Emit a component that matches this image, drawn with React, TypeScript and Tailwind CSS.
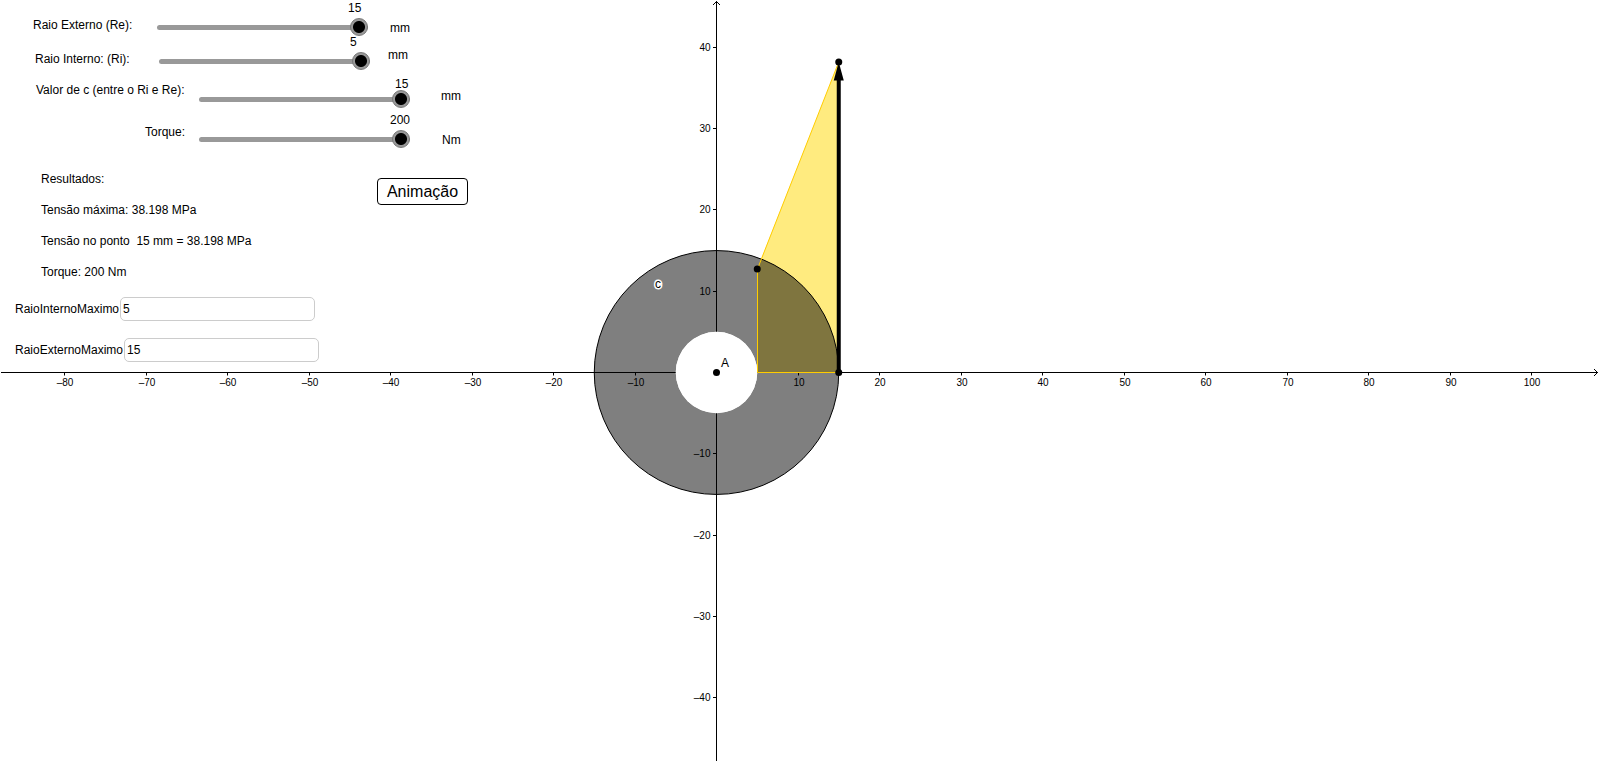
import { useEffect, useState } from 'react'
import clsx from 'clsx'

const ORIGIN = { x: 716.5, y: 372.5 }
const UNIT = { x: 8.15, y: 8.13 }
const PI = 3.1415

const px = (x: number) => ORIGIN.x + x * UNIT.x
const py = (y: number) => ORIGIN.y - y * UNIT.y
// keeps one pixel wide lines crisp
const snap = (v: number) => Math.floor(v) + 0.5

const tickLabel = (n: number) => (n < 0 ? `–${-n}` : `${n}`)

function useWindowSize() {
  const [size, setSize] = useState({ width: window.innerWidth, height: window.innerHeight })

  useEffect(() => {
    const onResize = () => setSize({ width: window.innerWidth, height: window.innerHeight })
    window.addEventListener('resize', onResize)
    return () => window.removeEventListener('resize', onResize)
  }, [])

  return size
}

function ticks(from: number, to: number) {
  const list: number[] = []
  for (let n = Math.ceil(from / 10) * 10; n <= to; n += 10) {
    if (n !== 0) list.push(n)
  }
  return list
}

interface GraphProps {
  outer: number
  inner: number
  c: number
  maxStress: number
}

function Graph({ outer, inner, c, maxStress }: GraphProps) {
  const { width, height } = useWindowSize()
  const right = width - 2
  const bottom = height - 2
  const xTicks = ticks(-ORIGIN.x / UNIT.x + 3, (right - ORIGIN.x) / UNIT.x - 3)
  const yTicks = ticks((ORIGIN.y - bottom) / UNIT.y + 3, ORIGIN.y / UNIT.y - 3)
  const stressAt = (r: number) => (maxStress * r) / outer

  const innerX = px(inner)
  const innerY = py(stressAt(inner))
  const cX = px(c)
  const cY = py(stressAt(c))

  return (
    <svg
      width={width}
      height={height}
      className="absolute inset-0 block font-['Liberation_Sans',Arial,sans-serif]"
      aria-label="Distribuição de tensões"
    >
      {/* axes */}
      <g stroke="#000" fill="none">
        <path d={`M1 ${ORIGIN.y}H${right}`} />
        <path d={`M${right - 4} ${ORIGIN.y - 3.5}L${right - 0.5} ${ORIGIN.y}L${right - 4} ${ORIGIN.y + 3.5}`} />
        <path d={`M${ORIGIN.x} 1V${bottom}`} />
        <path d={`M${ORIGIN.x - 3.5} 5L${ORIGIN.x} 1.5L${ORIGIN.x + 3.5} 5`} />
        {xTicks.map((n) => (
          <path key={n} d={`M${snap(px(n))} ${ORIGIN.y}v3`} />
        ))}
        {yTicks.map((n) => (
          <path key={n} d={`M${ORIGIN.x} ${snap(py(n))}h-3.5`} />
        ))}
      </g>
      <g fontSize="10" fill="#000">
        {xTicks.map((n) => (
          <text key={n} x={snap(px(n)) + 0.5} y={ORIGIN.y + 13.5} textAnchor="middle">
            {tickLabel(n)}
          </text>
        ))}
        {yTicks.map((n) => (
          <text key={n} x={ORIGIN.x - 6} y={snap(py(n)) + 3.5} textAnchor="end">
            {tickLabel(n)}
          </text>
        ))}
      </g>

      {/* stress distribution */}
      <path
        d={`M${innerX} ${ORIGIN.y}V${innerY}L${cX} ${cY}V${ORIGIN.y}Z`}
        fill="#ffd700"
        fillOpacity="0.5"
      />

      {/* shaft section */}
      <path
        fillRule="evenodd"
        fill="#000"
        fillOpacity="0.5"
        d={[outer, inner]
          .map((r) => {
            const rx = r * UNIT.x
            const ry = r * UNIT.y
            return `M${ORIGIN.x - rx} ${ORIGIN.y}a${rx} ${ry} 0 1 0 ${2 * rx} 0a${rx} ${ry} 0 1 0 ${-2 * rx} 0Z`
          })
          .join('')}
      />
      <ellipse cx={ORIGIN.x} cy={ORIGIN.y} rx={inner * UNIT.x} ry={inner * UNIT.y} fill="#fff" />
      <ellipse cx={ORIGIN.x} cy={ORIGIN.y} rx={outer * UNIT.x} ry={outer * UNIT.y} fill="none" stroke="#000" />

      <path
        d={`M${cX} ${ORIGIN.y}H${snap(innerX)}V${innerY}L${cX} ${cY}`}
        fill="none"
        stroke="#ffcc00"
        strokeWidth="1"
      />
      <path d={`M${cX} ${ORIGIN.y}V${cY + 18}`} stroke="#000" strokeWidth="4" />
      <path d={`M${cX} ${cY}l5 18.5h-10Z`} />

      {[
        [ORIGIN.x, ORIGIN.y],
        [innerX, innerY],
        [cX, cY],
        [cX, ORIGIN.y],
      ].map(([x, y]) => (
        <circle key={`${x},${y}`} cx={x} cy={y} r="3.5" />
      ))}
      <text x="721" y="367" fontSize="12">
        A
      </text>
      <text x="655" y="288" fontSize="12" stroke="#fff" strokeWidth="3" paintOrder="stroke">
        c
      </text>
    </svg>
  )
}

interface SliderRowProps {
  id: string
  label: string
  unit: string
  value: number
  max: number
  onChange: (value: number) => void
  rowClass: string
  labelClass: string
  valueClass: string
  unitClass: string
}

function SliderRow(props: SliderRowProps) {
  const { id, label, unit, value, max, onChange } = props
  return (
    <div className={clsx('flex items-start', props.rowClass)}>
      <label htmlFor={id} className={clsx('shrink-0', props.labelClass)}>
        {label}
      </label>
      <div className="w-[211px] shrink-0">
        <output htmlFor={id} className={clsx('block', props.valueClass)}>
          {value}
        </output>
        <input
          id={id}
          type="range"
          min={0}
          max={max}
          value={value}
          onChange={(e) => onChange(Number(e.target.value))}
          className="block h-[18px] w-full cursor-pointer appearance-none bg-transparent [&::-webkit-slider-runnable-track]:h-[5px] [&::-webkit-slider-runnable-track]:rounded-full [&::-webkit-slider-runnable-track]:bg-[#999] [&::-webkit-slider-thumb]:-mt-[7px] [&::-webkit-slider-thumb]:size-[18px] [&::-webkit-slider-thumb]:appearance-none [&::-webkit-slider-thumb]:rounded-full [&::-webkit-slider-thumb]:border [&::-webkit-slider-thumb]:border-[#777] [&::-webkit-slider-thumb]:bg-[radial-gradient(circle,#000_5.5px,#999_6.5px)]"
        />
      </div>
      <span className={props.unitClass}>{unit}</span>
    </div>
  )
}

interface FieldProps {
  id: string
  label: string
  value: string
  onChange: (value: string) => void
}

function Field({ id, label, value, onChange }: FieldProps) {
  return (
    <div className="flex items-center gap-px">
      <label htmlFor={id}>{label}</label>
      <input
        id={id}
        type="text"
        value={value}
        onChange={(e) => onChange(e.target.value)}
        className="h-6 w-[195px] rounded-[5px] border border-[#ccc] bg-white px-0.5 outline-none"
      />
    </div>
  )
}

export default function App() {
  const [outer, setOuter] = useState(15)
  const [inner, setInner] = useState(5)
  const [c, setC] = useState(15)
  const [torque, setTorque] = useState(200)
  const [innerMax, setInnerMax] = useState('5')
  const [outerMax, setOuterMax] = useState('15')

  // T·r/J, radii in mm and torque in Nm
  const j = (PI / 2) * (outer ** 4 - inner ** 4)
  const maxStress = j > 0 ? (torque * 1000 * outer) / j : 0
  const stressAtC = outer > 0 ? (maxStress * c) / outer : 0

  return (
    <main className="relative min-h-screen overflow-hidden bg-white font-['Liberation_Sans',Arial,sans-serif] text-[12px] leading-4 text-black">
      <Graph outer={outer} inner={inner} c={c} maxStress={maxStress} />

      <div className="relative w-fit">
        <SliderRow
          id="outer"
          label="Raio Externo (Re):"
          unit="mm"
          value={outer}
          max={Number(outerMax) || 0}
          onChange={setOuter}
          rowClass="h-[34px] pl-[33px]"
          labelClass="w-[124px] pt-[17px]"
          valueClass="mb-0.5 pl-[191px]"
          unitClass="pt-5 pl-[22px]"
        />
        <SliderRow
          id="inner"
          label="Raio Interno: (Ri):"
          unit="mm"
          value={inner}
          max={Number(innerMax) || 0}
          onChange={setInner}
          rowClass="h-[34px] pl-[35px]"
          labelClass="w-[124px] pt-[17px]"
          valueClass="mb-0.5 pl-[191px]"
          unitClass="pt-[13px] pl-[18px]"
        />
        <SliderRow
          id="c"
          label="Valor de c (entre o Ri e Re):"
          unit="mm"
          value={c}
          max={outer}
          onChange={setC}
          rowClass="mt-[11px] h-[33px] pl-9"
          labelClass="w-[163px] pt-[3px]"
          valueClass="pl-[196px] leading-[11px]"
          unitClass="pt-[9px] pl-[31px]"
        />
        <SliderRow
          id="torque"
          label="Torque:"
          unit="Nm"
          value={torque}
          max={200}
          onChange={setTorque}
          rowClass="h-[59px] pl-9"
          labelClass="w-[163px] pt-3 pr-[14px] text-right"
          valueClass="mb-0.5 pl-[191px]"
          unitClass="pt-5 pl-8"
        />

        <div className="flex items-start pl-[41px]">
          <div className="flex w-[336px] flex-col gap-[15px] whitespace-pre">
            <h2>Resultados:</h2>
            <p>Tensão máxima: {maxStress.toFixed(3)} MPa</p>
            <p>
              Tensão no ponto {' '}
              {c} mm = {stressAtC.toFixed(3)} MPa
            </p>
            <p>Torque: {torque} Nm</p>
          </div>
          <button
            type="button"
            className="mt-[7px] h-[27px] w-[91px] cursor-pointer rounded-[4px] border border-black bg-white text-[16px] leading-5"
          >
            Animação
          </button>
        </div>

        <div className="mt-[17px] flex flex-col gap-[17px] pl-[15px]">
          <Field id="inner-max" label="RaioInternoMaximo" value={innerMax} onChange={setInnerMax} />
          <Field id="outer-max" label="RaioExternoMaximo" value={outerMax} onChange={setOuterMax} />
        </div>
      </div>
    </main>
  )
}
